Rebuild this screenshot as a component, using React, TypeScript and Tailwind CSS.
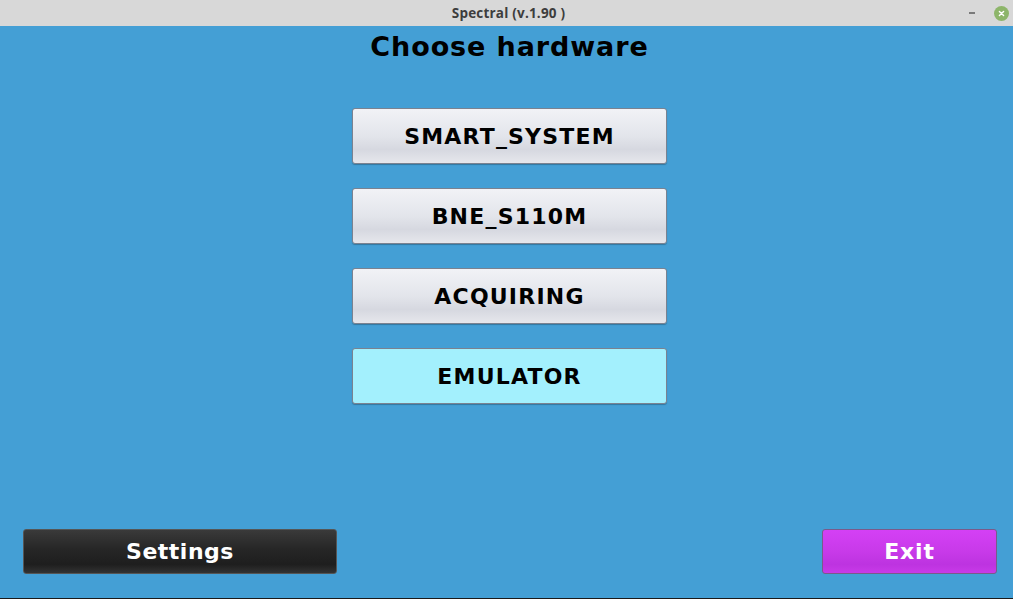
import React from 'react';

const HARDWARE = ['SMART_SYSTEM', 'BNE_S110M', 'ACQUIRING', 'EMULATOR'];

function HardwareButton({ label, active }: { label: string; active?: boolean }) {
  return (
    <button
      type="button"
      className={`w-[315px] h-[56px] rounded-[3px] border border-[#7b8290] shadow-[0_1px_1px_rgba(0,0,0,0.25)] text-[22px] font-bold tracking-[1.2px] text-black flex items-center justify-center ${
        active
          ? 'bg-[#a3f0fd]'
          : 'bg-[linear-gradient(to_bottom,#f1f2f6_0%,#e3e5eb_50%,#d6d8e0_75%,#e6e7ec_100%)]'
      }`}
    >
      {label}
    </button>
  );
}

export default function App() {
  return (
    <div
      className="w-[1013px] h-[599px] flex flex-col overflow-hidden"
      style={{ fontFamily: '"DejaVu Sans", sans-serif' }}
    >
      {/* window title bar */}
      <div className="h-[26px] bg-[#d8d8d8] flex items-center relative shrink-0">
        <span
          className="flex-1 text-center text-[13.5px] font-bold text-[#3d3d3d] pl-[4px] tracking-[0.2px]"
          style={{ fontFamily: '"Open Sans", "Noto Sans", sans-serif' }}
        >
          Spectral (v.1.90 )
        </span>
        <div className="absolute right-[4px] top-0 h-[26px] flex items-center gap-[19px]">
          <span className="block w-[6px] h-[2px] bg-[#7a7a7a]" />
          <span className="w-[15px] h-[15px] rounded-full bg-[#8db56a] flex items-center justify-center">
            <svg viewBox="0 0 10 10" className="w-[7px] h-[7px]" stroke="#fff" strokeWidth={2} strokeLinecap="round">
              <path d="M2 2l6 6M8 2l-6 6" />
            </svg>
          </span>
        </div>
      </div>

      {/* main area */}
      <div className="flex-1 bg-[#449fd5] flex flex-col items-center relative">
        <h1 className="mt-[4px] ml-[6px] text-[27px] leading-[34px] font-bold text-black tracking-[0.9px]">
          Choose hardware
        </h1>
        <div className="mt-[44px] flex flex-col gap-[24px] ml-[6px]">
          {HARDWARE.map((h) => (
            <HardwareButton key={h} label={h} active={h === 'EMULATOR'} />
          ))}
        </div>

        <div className="mt-auto mb-[24px] w-full flex justify-between pl-[23px] pr-[16px]">
          <button
            type="button"
            className="w-[314px] h-[45px] rounded-[3px] border border-[#555] bg-[linear-gradient(to_bottom,#3a3a3a_0%,#262626_45%,#1e1e1e_80%,#333_100%)] text-white text-[22px] font-bold tracking-[0.5px] flex items-center justify-center"
          >
            Settings
          </button>
          <button
            type="button"
            className="w-[175px] h-[45px] rounded-[3px] border border-[#7a5a8a] bg-[linear-gradient(to_bottom,#d440f5_0%,#c83ae9_50%,#bd33e0_80%,#c93ae8_100%)] text-white text-[22px] font-bold tracking-[0.8px] flex items-center justify-center"
          >
            Exit
          </button>
        </div>
        <div className="h-[1px] w-full bg-[#1a1a1a]" />
      </div>
    </div>
  );
}
